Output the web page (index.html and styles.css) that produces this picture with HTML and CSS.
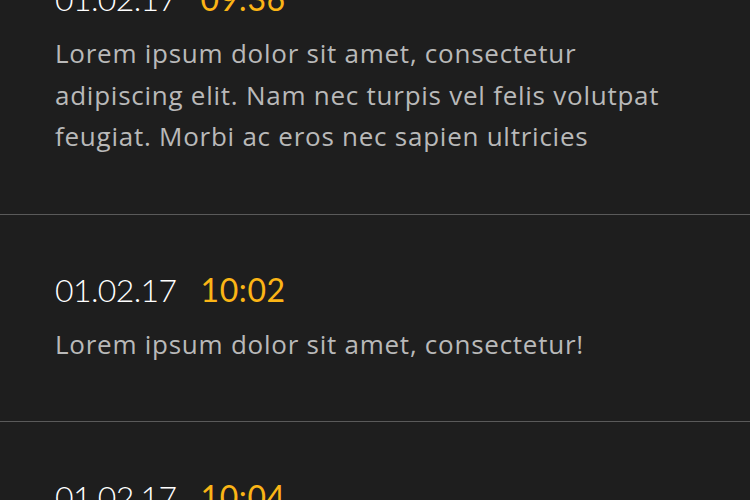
FILE: index.html
```html
<!DOCTYPE html>
<html lang="en">
<head>
    <meta charset="UTF-8">
    <meta name="viewport" content="width=device-width, initial-scale=1.0">
    <title>Messages</title>
    <link rel="stylesheet" href="styles.css">
</head>
<body>
    <div class="feed">
        <div class="entry">
            <div class="entry-head">
                <span class="date">01.02.17</span>
                <span class="time">09:36</span>
            </div>
            <p class="entry-text">Lorem ipsum dolor sit amet, consectetur adipiscing elit. Nam nec turpis vel felis volutpat feugiat. Morbi ac eros nec sapien ultricies</p>
        </div>
        <div class="entry">
            <div class="entry-head">
                <span class="date">01.02.17</span>
                <span class="time">10:02</span>
            </div>
            <p class="entry-text">Lorem ipsum dolor sit amet, consectetur!</p>
        </div>
        <div class="entry">
            <div class="entry-head">
                <span class="date">01.02.17</span>
                <span class="time">10:04</span>
            </div>
            <p class="entry-text">Lorem ipsum dolor sit amet, consectetur adipiscing elit.</p>
        </div>
    </div>
</body>
</html>
```

FILE: styles.css
```css
body {
    margin: 0;
    padding: 0;
    background-color: #1e1e1e;
    font-family: 'Open Sans', 'Lato', sans-serif;
    overflow: hidden;
}
.feed {
    margin-top: -76px; /* list is scrolled, first entry cut off */
}
.entry {
    padding: 59px 40px 56px 55px;
    border-bottom: 1px solid #5a5a5a;
}
.entry-head {
    display: flex;
    gap: 24px;
    font-family: 'Lato', sans-serif;
    font-size: 32px;
    line-height: 32px;
}
.date {
    color: #fff;
    font-weight: 300;
    letter-spacing: -0.6px;
}
.time {
    color: #fbb516;
    letter-spacing: 0.6px;
}
.entry-text {
    margin: 18px 0 0;
    font-size: 26px;
    line-height: 41.5px;
    letter-spacing: 0.75px;
    color: #b9b9b9;
    max-width: 620px;
}
```
